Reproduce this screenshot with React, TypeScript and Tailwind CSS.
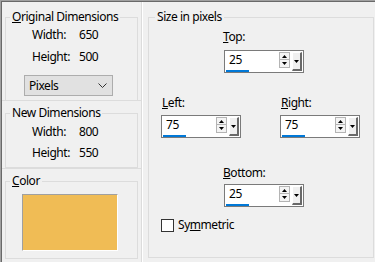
import React from "react";

const Tri = ({ up }: { up?: boolean }) => (
  <svg width="5" height="3" viewBox="0 0 5 3" className="block">
    {up ? <path d="M0 3 L2.5 0 L5 3 Z" fill="#000" /> : <path d="M0 0 L5 0 L2.5 3 Z" fill="#000" />}
  </svg>
);

const Spinner = ({ value }: { value: string }) => (
  <div className="flex h-[23px] w-[80px] border border-[#7a7a7a] bg-white">
    <div className="flex flex-1 flex-col">
      <span className="mt-[2px] h-[14px] pl-[4px] leading-[14px]">{value}</span>
      <div className="mt-[3px] ml-[1px] h-[3px] w-[23px] bg-[#0078d7]" />
    </div>
    <div className="mt-[1px] flex w-[11px] flex-col">
      <div className="flex h-[8px] items-center justify-center border border-[#b4b4b4] bg-[#f4f4f4]">
        <Tri up />
      </div>
      <div className="flex h-[8px] items-center justify-center border border-t-0 border-[#b4b4b4] bg-[#f4f4f4]">
        <Tri />
      </div>
    </div>
    <div className="mt-[1px] mr-[1px] ml-[2px] flex h-[19px] w-[10px] items-center justify-center border-t border-l border-r-2 border-b-2 border-t-white border-l-white border-r-[#696969] border-b-[#696969] bg-[#f0f0f0]">
      <Tri />
    </div>
  </div>
);

const Row = ({ label, value, className }: { label: string; value: string; className: string }) => (
  <div className={`flex h-[16px] pl-[26px] leading-[16px] ${className}`}>
    <span className="w-[47px]">{label}</span>
    <span>{value}</span>
  </div>
);

export default function App() {
  return (
    <div className="h-[262px] w-[375px] border-t border-l border-[#a0a0a0] bg-[#f0f0f0] font-['Noto_Sans',sans-serif] text-[12px] tracking-[-0.45px] text-black">
      <div className="flex h-full border-t border-l border-[#696969]">
        <div className="flex w-[140px] flex-col border-r border-[#dcdcdc]">
          <div className="h-[99px] border-b border-[#dcdcdc]">
            <fieldset className="mt-[7px] ml-[3px] h-[92px] w-[133px] border border-b-0 border-[#dcdcdc]">
              <legend className="ml-[4px] px-[2px] leading-[16px]">
                <u>O</u>riginal Dimensions
              </legend>
              <Row label="Width:" value="650" className="mt-[2px]" />
              <Row label="Height:" value="500" className="mt-[6px]" />
              <div className="mt-[10px] ml-[18px] flex h-[21px] w-[89px] items-center justify-between border border-[#adadad] bg-[#e1e1e1] pr-[5px] pl-[4px]">
                <span>Pixels</span>
                <svg width="9" height="5" viewBox="0 0 9 5">
                  <path d="M0.5 0.5 L4.5 4.5 L8.5 0.5" stroke="#333" fill="none" />
                </svg>
              </div>
            </fieldset>
          </div>
          <div className="h-[68px] border-b border-[#dcdcdc]">
            <fieldset className="mt-[4px] ml-[3px] h-[63px] w-[133px] border border-[#dcdcdc]">
              <legend className="ml-[4px] px-[2px] leading-[16px]">New Dimensions</legend>
              <Row label="Width:" value="800" className="mt-[3px]" />
              <Row label="Height:" value="550" className="mt-[5px]" />
            </fieldset>
          </div>
          <div className="flex-1">
            <fieldset className="mt-[4px] ml-[3px] h-[86px] w-[133px] border border-[#dcdcdc]">
              <legend className="ml-[4px] px-[2px] leading-[16px]">
                <u>C</u>olor
              </legend>
              <div className="mt-[5px] ml-[16px] h-[57px] w-[96px] border-t border-l border-r border-b border-t-[#a0a0a0] border-l-[#a0a0a0] border-r-white border-b-white bg-[#f0bc55]" />
            </fieldset>
          </div>
        </div>
        <div className="flex-1 border-l border-white">
          <fieldset className="mt-[7px] ml-[5px] h-[249px] w-[226px] border border-[#dcdcdc]">
            <legend className="ml-[6px] px-[2px] leading-[16px]">Size in pixels</legend>
            <div className="mt-[4px] ml-[74px] leading-[16px]">
              <u>T</u>op:
            </div>
            <div className="mt-[5px] ml-[75px]">
              <Spinner value="25" />
            </div>
            <div className="mt-[22px] flex pl-[12px]">
              <div className="w-[119px]">
                <div className="ml-[1px] leading-[16px]">
                  <u>L</u>eft:
                </div>
                <div className="mt-[4px]">
                  <Spinner value="75" />
                </div>
              </div>
              <div>
                <div className="ml-[1px] leading-[16px]">
                  <u>R</u>ight:
                </div>
                <div className="mt-[4px]">
                  <Spinner value="75" />
                </div>
              </div>
            </div>
            <div className="mt-[27px] ml-[74px] leading-[16px]">
              <u>B</u>ottom:
            </div>
            <div className="mt-[3px] ml-[75px]">
              <Spinner value="25" />
            </div>
            <div className="mt-[10px] ml-[12px] flex items-center gap-[4px]">
              <div className="h-[13px] w-[13px] border border-[#333] bg-white" />
              <span className="leading-[16px]">
                Sy<u>m</u>metric
              </span>
            </div>
          </fieldset>
        </div>
      </div>
    </div>
  );
}
